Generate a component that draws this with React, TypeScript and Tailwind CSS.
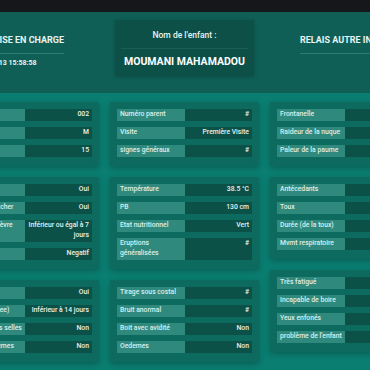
import React from "react";

type Row = { l: string; v: string };

const col1: Row[][] = [
  [
    { l: "Code", v: "002" },
    { l: "Sexe", v: "M" },
    { l: "Age", v: "15" },
  ],
  [
    { l: "Fièvre", v: "Oui" },
    { l: "Chaud au toucher", v: "Oui" },
    { l: "Durée de la fièvre", v: "Inférieur ou égal à 7 jours" },
    { l: "TDR", v: "Negatif" },
  ],
  [
    { l: "Diarrhée", v: "Oui" },
    { l: "Durée (diarrhee)", v: "Inférieur à 14 jours" },
    { l: "Sang dans les selles", v: "Non" },
    { l: "Autres problemes", v: "Non" },
  ],
];

const col2: Row[][] = [
  [
    { l: "Numéro parent", v: "#" },
    { l: "Visite", v: "Première Visite" },
    { l: "signes généraux", v: "#" },
  ],
  [
    { l: "Température", v: "38.5 °C" },
    { l: "PB", v: "130 cm" },
    { l: "Etat nutritionnel", v: "Vert" },
    { l: "Eruptions généralisées", v: "#" },
  ],
  [
    { l: "Tirage sous costal", v: "#" },
    { l: "Bruit anormal", v: "#" },
    { l: "Boit avec avidité", v: "Non" },
    { l: "Oedemes", v: "Non" },
  ],
];

const col3: Row[][] = [
  [
    { l: "Frontanelle", v: "Normale" },
    { l: "Raideur de la nuque", v: "Non" },
    { l: "Paleur de la paume", v: "Non" },
  ],
  [
    { l: "Antécedants", v: "Non" },
    { l: "Toux", v: "Non" },
    { l: "Durée (de la toux)", v: "#" },
    { l: "Mvmt respiratoire", v: "#" },
  ],
  [
    { l: "Très fatigué", v: "Non" },
    { l: "Incapable de boire", v: "Non" },
    { l: "Yeux enfonés", v: "Non" },
    { l: "problème de l'enfant", v: "Pneumonie" },
  ],
];

function Card({ rows }: { rows: Row[] }) {
  return (
    <div className="bg-[#0c6a5f] rounded-[2px] shadow-[0_2px_6px_rgba(0,0,0,0.25)] pt-[7px] pb-[9px] px-[7px] flex flex-col gap-[6px]">
      {rows.map((r, i) => (
        <div key={i} className="flex">
          <div className="w-[68px] shrink-0 bg-[#30897d] text-[#dcefeb] text-[6.8px] font-medium leading-[9.5px] py-[1.25px] px-[3px]">
            {r.l}
          </div>
          <div className="flex-1 bg-[#0b5148] text-[#e6f3f0] text-[6.8px] font-medium leading-[9.5px] py-[1.25px] px-[3px] text-right">
            {r.v}
          </div>
        </div>
      ))}
    </div>
  );
}

function Column({ cards }: { cards: Row[][] }) {
  return (
    <div className="w-[149px] flex flex-col gap-[11px]">
      {cards.map((c, i) => (
        <Card key={i} rows={c} />
      ))}
    </div>
  );
}

export default function App() {
  return (
    <div
      className="w-[370px] h-[370px] overflow-hidden bg-[#0a7e71]"
      style={{ fontFamily: "Roboto, 'Noto Sans', sans-serif" }}
    >
      <div className="h-[12px] bg-[#15171b]" />
      <div className="bg-[#0f5f56] h-[81px]">
        <div className="w-[469px] ml-[-50px] flex gap-[11px] pt-[8px]">
          <div className="w-[149px] flex justify-end pr-[35px] pt-[15px]">
            <div className="text-left">
              <div className="text-[9px] font-bold text-[#e8f4f1] leading-[11px] pb-[7px] border-b border-[#2a7d72] whitespace-nowrap">
                PRISE EN CHARGE
              </div>
              <div className="text-[7px] font-bold text-[#e8f4f1] leading-[9px] pt-[5px] whitespace-nowrap">
                05-13 15:58:58
              </div>
            </div>
          </div>
          <div className="w-[149px] px-[5px]">
            <div className="bg-[#0c5048] h-[56px] shadow-[0_1px_4px_rgba(0,0,0,0.2)] flex flex-col items-center px-[6px]">
              <div className="text-[8.5px] font-medium text-[#e8f4f1] leading-[10px] pt-[10px] pb-[8px] w-full text-center border-b border-[#1a5f56]">
                Nom de l'enfant :
              </div>
              <div className="text-[10.5px] font-bold text-white leading-[12px] pt-[7px]">
                MOUMANI MAHAMADOU
              </div>
            </div>
          </div>
          <div className="w-[149px] flex justify-start pl-[30px] pt-[15px]">
            <div className="text-left">
              <div className="text-[9px] font-bold text-[#e8f4f1] leading-[11px] pb-[7px] border-b border-[#2a7d72] whitespace-nowrap">
                RELAIS AUTRE INFIRMIER
              </div>
            </div>
          </div>
        </div>
      </div>
      <div className="w-[469px] ml-[-50px] flex gap-[11px] pt-[9px] items-start">
        <Column cards={col1} />
        <Column cards={col2} />
        <Column cards={col3} />
      </div>
    </div>
  );
}
